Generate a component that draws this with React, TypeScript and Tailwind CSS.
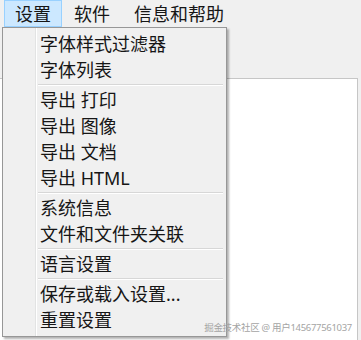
const font = '"Noto Sans", "Noto Sans CJK SC", sans-serif';

type Entry = { label: string } | { sep: true };

const entries: Entry[] = [
  { label: "字体样式过滤器" },
  { label: "字体列表" },
  { sep: true },
  { label: "导出 打印" },
  { label: "导出 图像" },
  { label: "导出 文档" },
  { label: "导出 HTML" },
  { sep: true },
  { label: "系统信息" },
  { label: "文件和文件夹关联" },
  { sep: true },
  { label: "语言设置" },
  { sep: true },
  { label: "保存或载入设置..." },
  { label: "重置设置" },
];

const MenuBarItem = ({ label, active }: { label: string; active?: boolean }) => (
  <div
    className={
      active
        ? "h-[27px] px-[10px] flex items-center border border-[#99d1ff] bg-[#cce8ff]"
        : "h-[27px] px-[11px] flex items-center border border-transparent"
    }
  >
    {label}
  </div>
);

export default function App() {
  return (
    <div
      className="relative w-[361px] h-[340px] overflow-hidden bg-[#f0f0f0] text-[18px] text-[#161616]"
      style={{ fontFamily: font }}
    >
      {/* menu bar */}
      <div className="flex pl-[4px] leading-none">
        <MenuBarItem label="设置" active />
        <MenuBarItem label="软件" />
        <MenuBarItem label="信息和帮助" />
      </div>

      {/* window behind */}
      <div className="h-[51px]" />
      <div className="w-[358px] h-[262px] bg-white border-t border-r border-[#c6c6c6]" />

      {/* dropdown */}
      <div className="absolute left-[2px] top-[27px] w-[225px] border border-[#979797] bg-[#f0f0f0] shadow-[2px_2px_2px_rgba(0,0,0,0.3)] flex">
        <div className="w-[33px] border-r border-[#e2e3e3]" />
        <div className="w-px bg-white" />
        <div className="flex-1 py-[3px] pr-[3px]">
          {entries.map((e, i) =>
            "sep" in e ? (
              <div key={i} className="h-[4px] pt-[1px] pl-[1px]">
                <div className="h-px bg-[#d7d7d7]" />
                <div className="h-px bg-white" />
              </div>
            ) : (
              <div key={i} className="h-[26px] leading-[26px] pl-[3px] whitespace-nowrap">
                {e.label}
              </div>
            )
          )}
        </div>
      </div>

      {/* watermark */}
      <div className="absolute right-[9px] bottom-[8px] text-[9.5px] tracking-[-0.3px] leading-none text-[#a4a4a4]">
        掘金技术社区 @ 用户145677561037
      </div>
    </div>
  );
}
